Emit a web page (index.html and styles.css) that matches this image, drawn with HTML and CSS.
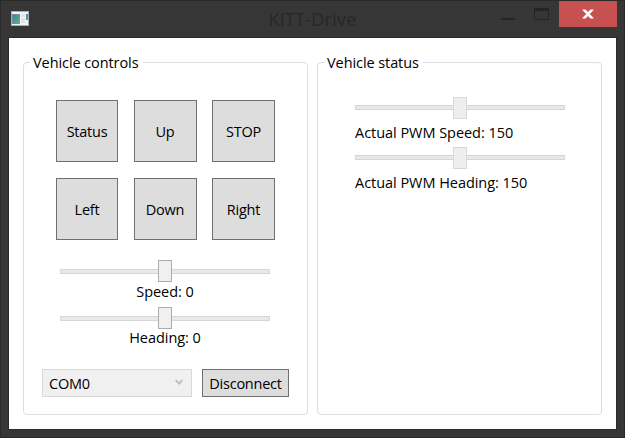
FILE: index.html
```html
<!DOCTYPE html>
<html lang="en">
<head>
<meta charset="utf-8">
<title>KITT-Drive</title>
<link rel="stylesheet" href="styles.css">
</head>
<body>
<div class="window">
  <header class="titlebar">
    <svg class="app-icon" width="18" height="15" viewBox="0 0 18 15">
      <defs><linearGradient id="g" x1="0" y1="0" x2="1" y2="1"><stop offset="0" stop-color="#4b78b0"/><stop offset="1" stop-color="#58b578"/></linearGradient></defs>
      <rect width="18" height="15" fill="#a9adb0"/>
      <rect x="1" y="1" width="16" height="13" fill="#f3f4f5"/>
      <rect x="1" y="3" width="8" height="10" fill="#8199ac"/>
      <rect x="1.5" y="3.5" width="7" height="9" fill="url(#g)"/>
      <path d="M10 3h4v3h-4zM10 7h4v5h-4z" fill="#e1e3e5"/>
      <rect x="15" y="3" width="2" height="6" fill="url(#g)"/>
    </svg>
    <h1 class="title">KITT-Drive</h1>
    <div class="caption-buttons">
      <svg class="minmax" width="58" height="26" viewBox="0 0 58 26" shape-rendering="crispEdges">
        <rect x="0" y="17" width="14" height="2" fill="#242424"/>
        <path d="M33 7h15v12H33zM34 10v8h13v-8z" fill="#242424" fill-rule="evenodd"/>
      </svg>
      <div class="close">
        <svg width="12" height="10" viewBox="0 0 12 10"><path d="M0.5 .5H3.5L6 3 8.500 .5H11.500V1.200L7.700 5 11.500 8.800V9.500H8.500L6 7 3.500 9.500H.5V8.800L4.300 5 .5 1.200Z" fill="#fff"/></svg>
      </div>
    </div>
  </header>
  <main class="client">
    <section class="group controls">
      <h2 class="legend">Vehicle controls</h2>
      <div class="pad">
        <button class="btn">Status</button><button class="btn">Up</button><button class="btn">STOP</button>
        <button class="btn">Left</button><button class="btn">Down</button><button class="btn">Right</button>
      </div>
      <div class="slider"><div class="thumb"></div></div>
      <div class="value speed">Speed: 0</div>
      <div class="slider"><div class="thumb"></div></div>
      <div class="value heading">Heading: 0</div>
      <div class="connection">
        <div class="combo"><span>COM0</span>
          <svg width="8" height="7" viewBox="0 0 8 7"><path d="M.7 1.200 4 4.700 7.300 1.200" fill="none" stroke="#b9b9b9" stroke-width="1.700"/></svg>
        </div>
        <button class="btn">Disconnect</button>
      </div>
    </section>
    <section class="group status">
      <h2 class="legend">Vehicle status</h2>
      <div class="slider disabled"><div class="thumb"></div></div>
      <div class="value">Actual PWM Speed: 150</div>
      <div class="slider disabled"><div class="thumb"></div></div>
      <div class="value">Actual PWM Heading: 150</div>
    </section>
  </main>
</div>
</body>
</html>
```

FILE: styles.css
```css
* { box-sizing: border-box; }
body {
  margin: 0;
  font: 14.500px/20px "Open Sans", "Noto Sans", sans-serif;
  letter-spacing: -0.040px;
  color: #000;
}
h1, h2 { margin: 0; font: inherit; }
.window {
  width: 625px;
  height: 438px;
  border: 1px solid #2a292a;
  background: #363636;
  padding: 0 7px 7px;
}
.titlebar {
  display: grid;
  grid-template-columns: 1fr auto 1fr;
  height: 36px;
}
.app-icon { margin: 10px 0 0 3px; }
.title {
  margin-top: 5px;
  font-size: 18px;
  line-height: 26px;
  letter-spacing: 0.250px;
  color: #272727;
}
.caption-buttons { display: flex; justify-content: flex-end; }
.minmax { flex: none; }
.close {
  display: flex;
  align-items: center;
  justify-content: center;
  width: 58px;
  height: 26px;
  background: #c75050;
}
.client {
  display: flex;
  gap: 9px;
  height: 393px;
  border: 1px solid #2a2a2a;
  background: #fff;
  padding: 24px 14px 14px;
}
.group {
  width: 285px;
  height: 353px;
  border: 1px solid #d5dfe5;
  border-radius: 4px;
}
.legend {
  width: max-content;
  margin: -10px 0 0 6px;
  padding: 0 4px 0 3px;
  background: #fff;
  letter-spacing: -0.080px;
}
.pad {
  display: grid;
  grid-template-columns: 62px 63px 63px;
  grid-template-rows: 62px 62px;
  gap: 16px;
  column-gap: 15.500px;
  margin: 27px 0 20px 32px;
}
.btn {
  padding: 2px 0 0;
  border: 1px solid #707070;
  background: #ddd;
  font: inherit;
  letter-spacing: -0.250px;
  color: #000;
}
.slider {
  display: flex;
  align-items: center;
  justify-content: center;
  width: 210px;
  height: 22px;
  margin-left: 36px;
  background: linear-gradient(#d6d6d6, #d6d6d6) 0 9px / 100% 5px no-repeat;
  position: relative;
}
.slider::before {
  content: "";
  position: absolute;
  left: 1px;
  right: 1px;
  top: 10px;
  height: 3px;
  background: #e7eaea;
}
.slider.disabled { background-position: 0 8px; }
.slider.disabled::before { top: 9px; }
.thumb {
  position: relative;
  width: 14px;
  height: 22px;
  border: 1px solid #acacac;
  background: #f0f0f0;
}
.disabled .thumb { border-color: #d9d9d9; background: #eee; }
.controls .value { width: 210px; margin-left: 36px; text-align: center; }
.speed { height: 25px; }
.heading { height: 40px; line-height: 18px; }
.connection { display: flex; gap: 10px; margin-left: 18px; }
.combo {
  display: flex;
  justify-content: space-between;
  align-items: center;
  width: 150px;
  height: 28px;
  border: 1px solid #d9d9d9;
  background: #f0f0f0;
  padding: 0 8px 0 6px;
  letter-spacing: -0.200px;
}
.combo span { padding-top: 2px; }
.combo svg { margin-bottom: 1px; }
.connection .btn { width: 87px; height: 28px; }
.status .legend { margin-bottom: 24px; }
.status .slider, .status .value { margin-left: 37px; }
.status .value { height: 28px; padding-top: 4px; }
```
